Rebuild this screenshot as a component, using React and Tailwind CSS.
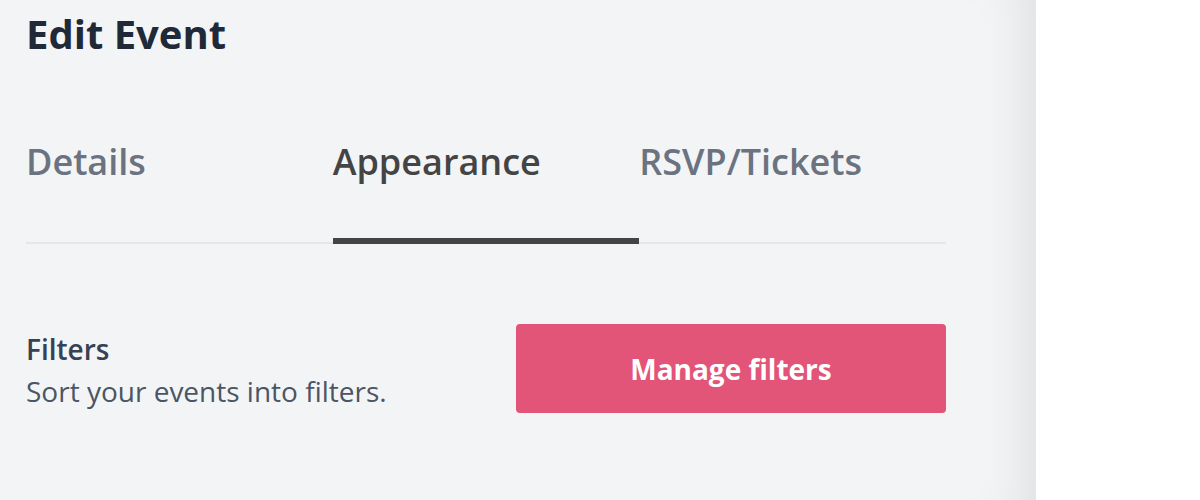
export default function App() {
  const tabs = ["Details", "Appearance", "RSVP/Tickets"];
  const active = 1;

  return (
    <div className="flex h-[500px] w-[1200px] bg-white" style={{ fontFamily: '"Open Sans", sans-serif' }}>
      <div className="h-full w-[1036px] bg-[#f3f4f6] pl-[26px] shadow-[inset_-50px_0_50px_-40px_rgba(0,0,0,0.09)]">
        <div className="w-[920px]">
          <h1 className="pt-[6px] text-[40px] font-bold leading-[56px] text-[#1f2937]">Edit Event</h1>

          <div className="mt-[44px] grid grid-cols-3 border-b-2 border-[#e5e7eb]">
            {tabs.map((t, i) => (
              <div key={t} className="relative h-[136px]">
                <span
                  className={
                    "block pt-[26px] text-[36px] font-semibold leading-[60px] " +
                    (i === active ? "text-[#444444]" : "text-[#6b7280]")
                  }
                >
                  {t}
                </span>
                {i === active && <div className="absolute bottom-[-2px] left-0 h-[6px] w-full bg-[#444444]" />}
              </div>
            ))}
          </div>

          <div className="mt-[80px] flex items-center justify-between">
            <div className="pt-[2px]">
              <div className="text-[28px] font-semibold leading-[42px] text-[#374151]">Filters</div>
              <div className="text-[28px] leading-[42px] text-[#4b5563]">Sort your events into filters.</div>
            </div>
            <button className="flex h-[89px] w-[430px] items-center justify-center rounded-[4px] bg-[#e25478] text-[28px] font-bold text-white">
              Manage filters
            </button>
          </div>
        </div>
      </div>
    </div>
  );
}
